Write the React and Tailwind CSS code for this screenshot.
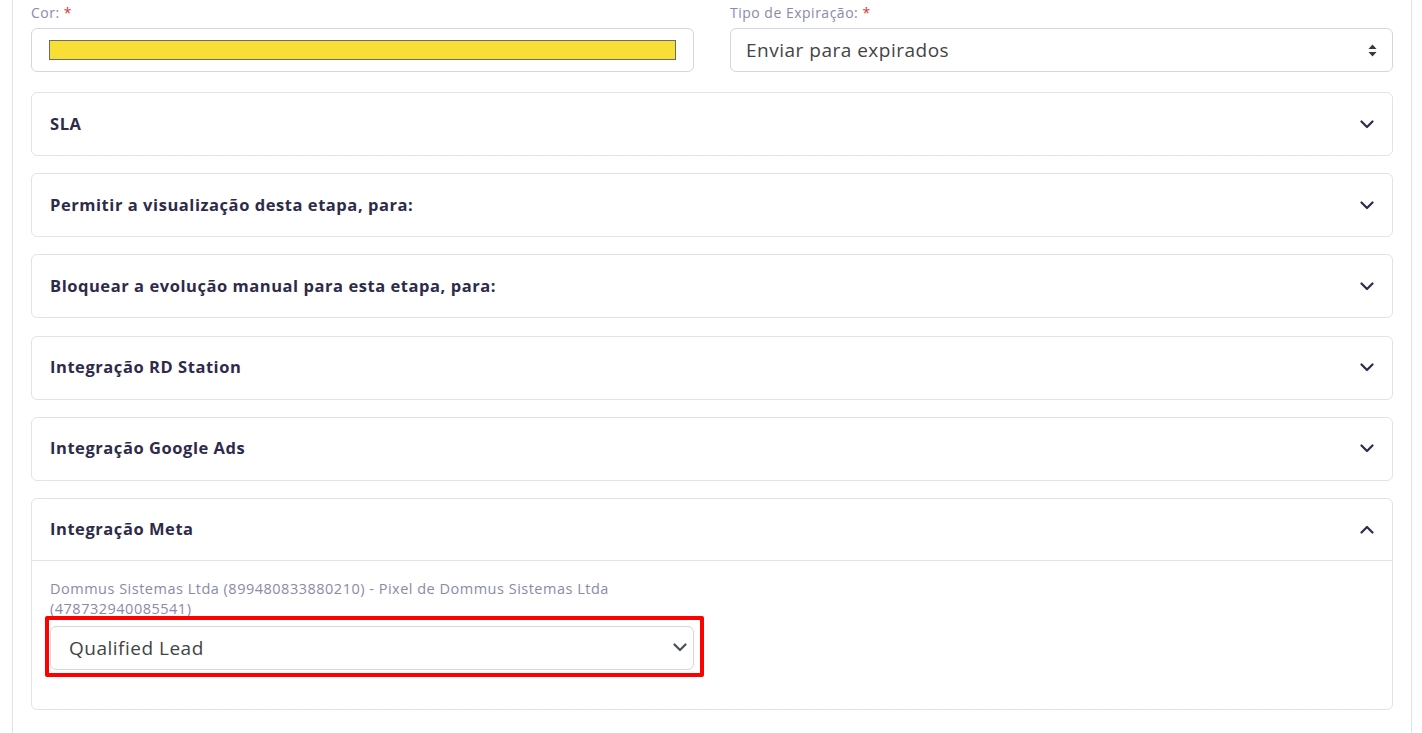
import React, { useState } from 'react';

const font = { fontFamily: '"Open Sans", "Liberation Sans", sans-serif' };

const Chevron = ({ up = false, className = '' }) => (
    <svg width="14" height="9" viewBox="0 0 14 9" className={className}>
        <polyline
            points={up ? '1.5,7.5 7,2 12.5,7.5' : '1.5,1.5 7,7 12.5,1.5'}
            fill="none"
            stroke="currentColor"
            strokeWidth="2.2"
            strokeLinecap="round"
            strokeLinejoin="round"
        />
    </svg>
);

const SortArrows = () => (
    <svg width="9" height="13" viewBox="0 0 9 13" className="text-[#343a40]">
        <path d="M4.5 0.5 L8.5 5 L0.5 5 Z" fill="currentColor" />
        <path d="M4.5 12.5 L8.5 8 L0.5 8 Z" fill="currentColor" />
    </svg>
);

const Label = ({ children }) => (
    <label className="block text-sm leading-5 tracking-[0.5px] text-[#8b8aa8] mb-[5px]">
        {children}: <span className="text-[#e3342f]">*</span>
    </label>
);

const AccordionItem = ({ title, open, onToggle, children }) => (
    <div className="border border-[#e1e3e8] rounded-md bg-white">
        <button
            type="button"
            onClick={onToggle}
            className={`w-full h-[62px] px-[18px] flex items-center justify-between text-left ${open ? 'border-b border-[#e1e3e8]' : ''}`}
        >
            <span className="text-[16.5px] font-bold text-[#2e2b4a] tracking-[0.55px]">{title}</span>
            <Chevron up={open} className="text-[#2e2b4a]" />
        </button>
        {open && children}
    </div>
);

const App = () => {
    const [openItem, setOpenItem] = useState('meta');

    const sections = [
        { key: 'sla', title: 'SLA' },
        { key: 'visualizacao', title: 'Permitir a visualização desta etapa, para:' },
        { key: 'bloqueio', title: 'Bloquear a evolução manual para esta etapa, para:' },
        { key: 'rd', title: 'Integração RD Station' },
        { key: 'google', title: 'Integração Google Ads' },
        { key: 'meta', title: 'Integração Meta' },
    ];

    return (
        <div className="min-h-screen bg-white" style={font}>
            <div className="ml-3 mr-[10px] min-h-screen border-x border-[#dee2e6] px-[18px] pt-[3px] pb-6">
                {/* Cor / Tipo de expiração */}
                <div className="grid grid-cols-2 gap-9">
                    <div>
                        <Label>Cor</Label>
                        <div className="h-[44px] border border-[#d4d6de] rounded-md flex items-center px-[17px]">
                            <div className="w-full h-[20px] bg-[#f7df35] border border-[#6b6b6b]" />
                        </div>
                    </div>
                    <div>
                        <Label>Tipo de Expiração</Label>
                        <div className="h-[44px] border border-[#d4d6de] rounded-md flex items-center justify-between pl-[15px] pr-[15px]">
                            <span className="text-[19px] tracking-[0.5px] text-[#444]">Enviar para expirados</span>
                            <SortArrows />
                        </div>
                    </div>
                </div>

                <div className="mt-5 flex flex-col gap-[17.2px]">
                    {sections.map((s) => (
                        <AccordionItem
                            key={s.key}
                            title={s.title}
                            open={openItem === s.key}
                            onToggle={() => setOpenItem(openItem === s.key ? null : s.key)}
                        >
                            {s.key === 'meta' && (
                                <div className="px-[18px] pt-[18px] pb-[39px]">
                                    <div className="w-[644px]">
                                        <p className="text-[14.5px] leading-5 tracking-[0.5px] text-[#8b8aa8]">
                                            Dommus Sistemas Ltda (899480833880210) - Pixel de Dommus Sistemas Ltda (478732940085541)
                                        </p>
                                        <div className="relative mt-[7px]">
                                            <div className="h-[44px] border border-[#d4d6de] rounded-md flex items-center justify-between pl-[18px] pr-[6px]">
                                                <span className="text-[19px] tracking-[0.5px] text-[#444]">Qualified Lead</span>
                                                <Chevron className="text-[#495057]" />
                                            </div>
                                            {/* highlight box */}
                                            <div className="absolute -left-[5px] -top-[10px] w-[659px] h-[61px] border-4 border-[#ff0000] rounded-[2px] pointer-events-none" />
                                        </div>
                                    </div>
                                </div>
                            )}
                        </AccordionItem>
                    ))}
                </div>
            </div>
        </div>
    );
};

export default App;
